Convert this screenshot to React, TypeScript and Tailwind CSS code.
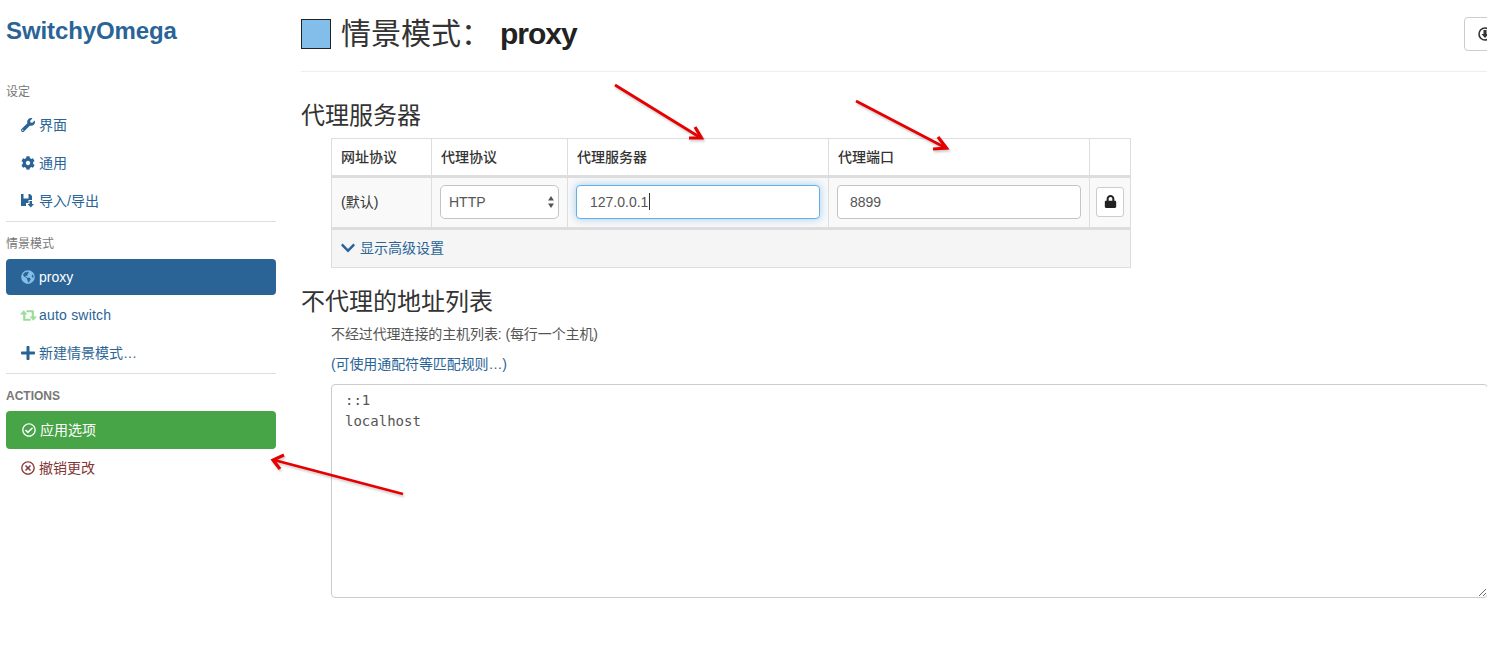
import { ReactNode } from 'react';
import {
  FaWrench,
  FaCog,
  FaGlobeAmericas,
  FaPlus,
  FaRegCheckCircle,
  FaRegTimesCircle,
  FaChevronDown,
  FaLock,
} from 'react-icons/fa';

const font = "font-['Liberation_Sans','Noto_Sans_CJK_SC',sans-serif]";

function SideLabel({ children }: { children: ReactNode }) {
  return <div className="mb-[5px] h-5 text-xs leading-[22px] text-[#777]">{children}</div>;
}

function SideItem({ icon, children, tone = 'text-[#2a6496]' }: { icon: ReactNode; children: ReactNode; tone?: string }) {
  return (
    <a className={`flex h-[38px] items-center gap-1 pl-[15px] text-sm ${tone}`}>
      {icon}
      <span>{children}</span>
    </a>
  );
}

function ImportIcon() {
  return (
    <svg className="h-[14px] w-[14px]" viewBox="0 0 14 14" fill="currentColor">
      <path d="M0 0h2.500v4.500h5V0H9l2 2v4H7.500v3H5v3H0z" />
      <path d="M8.500 7H11v3h2l-3.250 3.500L6.500 10h2z" />
    </svg>
  );
}

function RetweetIcon() {
  return (
    <svg className="-mr-[2px] -ml-px h-[13px] w-[17px] text-[#99dd99]" viewBox="0 0 16 12" fill="currentColor">
      <path d="M0 5L3.500 1 7 5H5v4h5v2H3V5z" />
      <path d="M16 7l-3.500 4L9 7h2V3H6V1h7v6z" />
    </svg>
  );
}

function CircleArrowIcon() {
  return (
    <svg className="h-[14px] w-[14px] shrink-0" viewBox="0 0 14 14">
      <circle cx="7" cy="7" r="6" fill="none" stroke="currentColor" strokeWidth="1.600" />
      <path d="M5.500 3h3v4h2L7 11 3.500 7h2z" fill="currentColor" />
    </svg>
  );
}

function Arrow({ line, head }: { line: string; head: string }) {
  return (
    <g fill="none" stroke="#e60000" strokeWidth="2.800">
      <path d={line} />
      <path d={head} strokeWidth="3.200" />
    </g>
  );
}

export default function App() {
  return (
    <div className={`relative flex h-[654px] w-[1487px] overflow-hidden bg-white ${font} text-[#333]`}>
      <aside className="w-[301px] shrink-0 pl-[6px] pr-[25px]">
        <h1 className="mb-[19px] h-[62px] text-2xl leading-[62px] font-bold tracking-[-0.1px] text-[#2a6496]">SwitchyOmega</h1>
        <SideLabel>设定</SideLabel>
        <SideItem icon={<FaWrench className="h-[14px] w-[14px]" />}>界面</SideItem>
        <SideItem icon={<FaCog className="h-[14px] w-[14px]" />}>通用</SideItem>
        <SideItem icon={<ImportIcon />}>导入/导出</SideItem>
        <div className="mt-px mb-[11px] h-px bg-[#ddd]" />
        <SideLabel>情景模式</SideLabel>
        <div className="flex h-[38px] items-center">
          <div className="flex h-9 w-full items-center gap-1 rounded bg-[#2a6496] pl-[15px] text-sm text-white">
            <FaGlobeAmericas className="h-[14px] w-[14px] text-[#83beeb]" />
            <span>proxy</span>
          </div>
        </div>
        <SideItem icon={<RetweetIcon />}><span className="tracking-[0.2px]">auto switch</span></SideItem>
        <SideItem icon={<FaPlus className="h-4 w-[14px]" />}>新建情景模式…</SideItem>
        <div className="mt-px mb-[11px] h-px bg-[#ddd]" />
        <div className="mb-[6px] h-5 text-xs leading-[22px] font-bold text-[#777]">ACTIONS</div>
        <div className="flex h-[38px] items-center gap-1 rounded bg-[#47a447] pl-4 text-sm text-white">
          <FaRegCheckCircle className="h-[14px] w-[14px]" />
          <span>应用选项</span>
        </div>
        <SideItem tone="text-[#843534]" icon={<FaRegTimesCircle className="h-[14px] w-[14px]" />}>撤销更改</SideItem>
      </aside>

      <main className="w-[1186px] shrink-0">
        <header className="flex h-[72px] items-start justify-between border-b border-[#eee] pt-[17px]">
          <div className="flex items-center">
            <span className="h-[30px] w-[30px] border border-[#222] bg-[#83beeb]" />
            <h1 className="ml-[10px] text-[30px] leading-[34px] text-[#333]">情景模式：</h1>
            <span className="ml-[9px] text-[30px] leading-[34px] font-bold tracking-[-1px] text-[#222]">proxy</span>
          </div>
          <button className="-mr-[20px] flex h-[34px] w-[43px] items-center rounded border border-[#ccc] pl-[13px] text-[#333]">
            <CircleArrowIcon />
          </button>
        </header>

        <h3 className="mt-[31px] mb-[9px] text-2xl leading-[26px] text-[#333]">代理服务器</h3>
        <div className="ml-[30px] w-[799px] text-sm">
          <table className="w-full table-fixed border-collapse">
            <colgroup>
              <col className="w-[100px]" />
              <col className="w-[136px]" />
              <col className="w-[261px]" />
              <col className="w-[261px]" />
              <col className="w-[41px]" />
            </colgroup>
            <thead>
              <tr className="h-[38px] border-b-[3px] border-[#ddd]">
                {['网址协议', '代理协议', '代理服务器', '代理端口', ''].map((h) => (
                  <th key={h} className="border border-b-[3px] border-[#ddd] pl-[9px] text-left font-medium">{h}</th>
                ))}
              </tr>
            </thead>
            <tbody>
              <tr className="h-[52px] bg-[#f9f9f9]">
                <td className="border border-b-[3px] border-[#ddd] pb-[2px] pl-[9px]">(默认)</td>
                <td className="border border-b-[3px] border-[#ddd] pb-[2px] pl-2">
                  <div className="relative flex h-[34px] w-[119px] items-center rounded-[5px] border border-[#c4c4c4] bg-white pl-2 text-[#555]">
                    HTTP
                    <svg className="absolute right-[3px] top-[9px]" width="8" height="14" viewBox="0 0 8 14">
                      <path d="M4 1l3 4.500H1zM4 13L1 8.500h6z" fill="#555" />
                    </svg>
                  </div>
                </td>
                <td className="border border-b-[3px] border-[#ddd] pb-[2px] pl-2">
                  <div className="flex h-[34px] w-[244px] items-center rounded border border-[#66afe9] bg-white pl-[13px] text-[#555] shadow-[0_0_8px_rgba(102,175,233,0.6)]">
                    127.0.0.1<span className="ml-px h-[17px] w-px bg-[#333]" />
                  </div>
                </td>
                <td className="border border-b-[3px] border-[#ddd] pb-[2px] pl-2">
                  <div className="flex h-[34px] w-[244px] items-center rounded border border-[#c4c4c4] bg-white pl-3 text-[#555]">8899</div>
                </td>
                <td className="border border-b-[3px] border-[#ddd] pb-[2px] pl-[6px]">
                  <button className="flex h-[30px] w-[28px] items-center justify-center rounded-[3px] border border-[#ccc] bg-white text-[#222]">
                    <FaLock className="h-[13px] w-[13px]" />
                  </button>
                </td>
              </tr>
              <tr className="h-[39px] bg-[#f5f5f5]">
                <td colSpan={5} className="border border-[#ddd] pb-[2px] pl-[9px]">
                  <a className="flex items-center gap-[5px] text-[#2a6496]">
                    <FaChevronDown className="h-4 w-[14px]" />
                    <span>显示高级设置</span>
                  </a>
                </td>
              </tr>
            </tbody>
          </table>
        </div>

        <h3 className="mt-[21px] text-2xl leading-[26px] text-[#333]">不代理的地址列表</h3>
        <div className="mt-[9px] ml-[30px] h-5 text-sm leading-5 tracking-[-0.1px] text-[#555]">不经过代理连接的主机列表: (每行一个主机)</div>
        <a className="mt-[10px] ml-[30px] block h-5 text-sm leading-5 tracking-[-0.1px] text-[#2a6496]">(可使用通配符等匹配规则…)</a>
        <textarea
          readOnly
          defaultValue={'::1\nlocalhost'}
          className="mt-[10px] ml-[30px] block h-[214px] w-[1157px] rounded border border-[#ccc] px-[13px] py-[5px] font-['DejaVu_Sans_Mono',monospace] text-sm leading-[21px] text-[#555] outline-none"
        />
      </main>

      <svg className="pointer-events-none absolute inset-0 h-full w-full drop-shadow-[1px_2px_1px_rgba(0,0,0,0.2)]" viewBox="0 0 1487 654">
        <Arrow line="M615 85L701 138" head="M695 127L701.500 138L689 138" />
        <Arrow line="M856 101L946 148" head="M938 137L946.500 148L933 149" />
        <Arrow line="M403 494L274 460" head="M284 455L273 460L280 469" />
      </svg>
    </div>
  );
}
